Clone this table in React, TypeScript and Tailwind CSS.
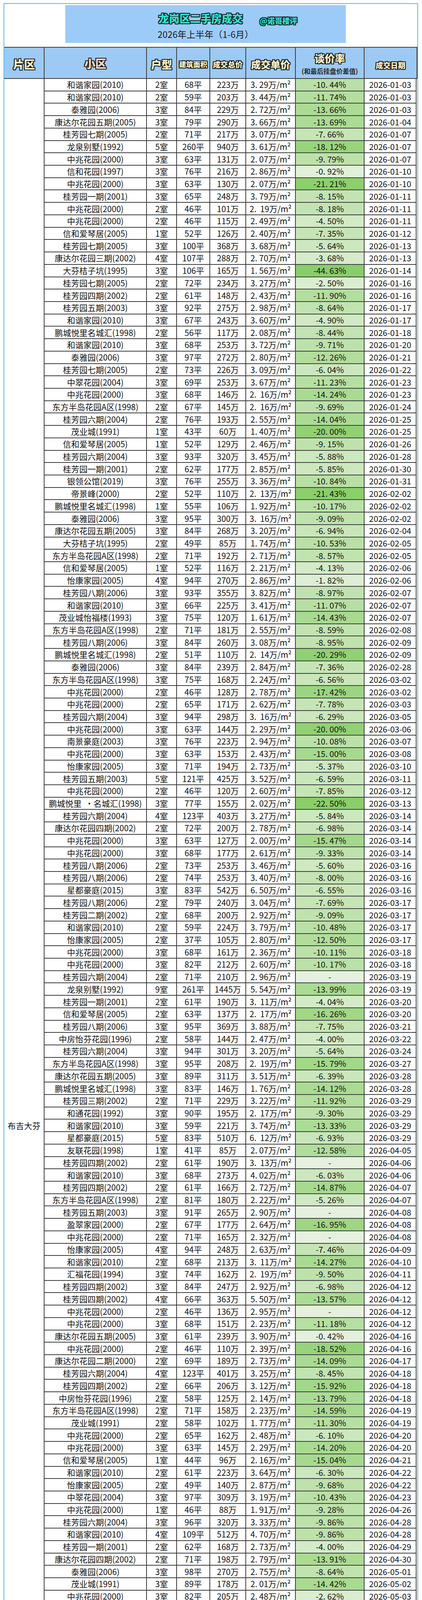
const ROWS = `
和谐家园(2010)|2|68|223|3.29|10.44|01-03
和谐家园(2010)|2|59|203|3.44|11.74|01-03
泰雅园(2006)|3|84|229|2.72|13.66|01-03
康达尔花园五期(2005)|3|79|290|3.66|13.69|01-04
桂芳园七期(2005)|2|71|217|3.07|7.66|01-07
龙泉别墅(1992)|5|260|940|3.61|18.12|01-07
中兆花园(2000)|3|63|131|2.07|9.79|01-07
信和花园(1997)|3|76|216|2.86|0.92|01-10
中兆花园(2000)|3|63|130|2.07|21.21|01-10
桂芳园一期(2001)|3|65|248|3.79|8.15|01-11
中兆花园(2000)|2|46|101|2.19*|8.18|01-11
中兆花园(2000)|2|46|115|2.49|4.50|01-11
信和爱琴居(2005)|1|52|126|2.40|7.35|01-12
桂芳园七期(2005)|3|100|368|3.68|5.64|01-13
康达尔花园三期(2002)|4|107|288|2.70|3.68|01-13
大芬桔子坑(1995)|3|106|165|1.56|44.63|01-14
桂芳园七期(2005)|2|72|234|3.27|2.50|01-16
桂芳园四期(2002)|2|61|148|2.43|11.90|01-16
桂芳园五期(2003)|3|92|275|2.98|8.64|01-17
和谐家园(2010)|3|67|243|3.60|4.90|01-17
鹏城悦里名城汇(1998)|2|56|117|2.08|8.44|01-18
和谐家园(2010)|3|68|253|3.72|9.71|01-20
泰雅园(2006)|3|97|272|2.80|12.26|01-21
桂芳园七期(2005)|2|73|226|3.09|6.04|01-22
中翠花园(2004)|3|69|253|3.67|11.23|01-23
中兆花园(2000)|3|68|146|2.16*|14.24|01-23
东方半岛花园A区(1998)|2|67|145|2.16*|9.69|01-24
桂芳园六期(2004)|2|76|193|2.55|14.04|01-25
茂业城(1991)|1|43|60|1.40|20.00|01-25
信和爱琴居(2005)|1|52|129|2.46|9.15|01-26
桂芳园六期(2004)|3|93|320|3.45|5.88|01-28
桂芳园一期(2001)|2|62|177|2.85|5.85|01-30
银领公馆(2019)|3|76|255|3.36|10.84|01-31
帝景峰(2000)|2|52|110|2.13*|21.43|02-02
鹏城悦里名城汇(1998)|1|55|106|1.92|10.17|02-02
泰雅园(2006)|3|95|300|3.16*|9.09|02-02
康达尔花园五期(2005)|3|84|268|3.20|6.94|02-04
大芬桔子坑(1995)|2|49|85|1.74|10.53|02-05
东方半岛花园A区(1998)|2|71|192|2.71|8.57|02-05
信和爱琴居(2005)|1|52|116|2.21|4.13|02-06
怡康家园(2005)|4|94|270|2.86|1.82|02-06
桂芳园八期(2006)|3|93|355|3.82|8.97|02-07
和谐家园(2010)|3|66|225|3.41|11.07|02-07
茂业城怡福楼(1993)|3|75|120|1.61|14.43|02-07
东方半岛花园A区(1998)|2|71|181|2.55|8.59|02-08
桂芳园八期(2006)|3|84|260|3.08|8.95|02-09
鹏城悦里名城汇(1998)|2|51|110|2.14*|20.29|02-09
泰雅园(2006)|3|84|239|2.84|7.36|02-28
东方半岛花园A区(1998)|3|75|168|2.24|6.56|03-02
中兆花园(2000)|2|46|128|2.78|17.42|03-02
中兆花园(2000)|2|65|171|2.62|7.78|03-03
桂芳园六期(2004)|3|94|298|3.16*|6.29|03-05
中兆花园(2000)|3|63|144|2.29|20.00|03-06
南景豪庭(2003)|3|76|223|2.94|10.08|03-07
中兆花园(2000)|3|63|153|2.43|15.00|03-08
怡康家园(2005)|3|71|194|2.73|5.37|03-10
桂芳园五期(2003)|5|121|425|3.52|6.59|03-11
中兆花园(2000)|2|46|120|2.60|7.85|03-12
鹏城悦里  ·名城汇(1998)|3|77|155|2.02|22.50|03-13
桂芳园六期(2004)|4|123|403|3.27|5.84|03-14
康达尔花园四期(2002)|2|72|200|2.78|6.98|03-14
中兆花园(2000)|3|63|127|2.00|15.47|03-14
中兆花园(2000)|3|68|177|2.61|9.33|03-14
桂芳园八期(2006)|2|73|253|3.46|5.60|03-16
桂芳园八期(2006)|2|74|253|3.40|8.00|03-16
星都豪庭(2015)|3|83|542|6.50|6.55|03-16
桂芳园八期(2006)|2|79|240|3.04|7.69|03-17
桂芳园二期(2002)|2|68|200|2.92|9.09|03-17
和谐家园(2010)|2|59|224|3.79|10.48|03-17
怡康家园(2005)|2|37|105|2.80|12.50|03-17
中兆花园(2000)|3|68|161|2.36|10.11|03-18
中兆花园(2000)|3|82|212|2.60|10.17|03-18
桂芳园六期(2004)|2|71|210|2.96|-|03-19
龙泉别墅(1992)|9|261|1445|5.54|13.99|03-19
桂芳园一期(2001)|2|61|190|3.11*|4.04|03-20
信和爱琴居(2005)|2|63|137|2.17*|16.26|03-20
桂芳园八期(2006)|3|95|369|3.88|7.75|03-21
中房怡芬花园(1996)|2|58|144|2.47|4.00|03-22
桂芳园六期(2004)|3|94|301|3.20|5.64|03-24
东方半岛花园A区(1998)|3|95|208|2.19*|15.79|03-27
康达尔花园五期(2005)|3|89|311|3.51|6.39|03-28
鹏城悦里名城汇(1998)|3|83|146|1.76|14.12|03-28
桂芳园三期(2002)|2|71|229|3.22|11.92|03-29
和通花园(1992)|3|90|195|2.17*|9.30|03-29
和谐家园(2010)|3|59|221|3.74|13.33|03-29
星都豪庭(2015)|5|83|510|6.12*|6.93|03-29
友联花园(1998)|1|41|85|2.07|12.58|04-05
桂芳园四期(2002)|2|61|190|3.13*|-|04-06
和谐家园(2010)|3|68|273|4.02|6.03|04-06
桂芳园四期(2002)|2|61|166|2.72|14.87|04-07
东方半岛花园A区(1998)|2|81|180|2.22|5.26|04-07
桂芳园五期(2003)|3|91|265|2.90|-|04-08
盈翠家园(2000)|2|67|177|2.64|16.95|04-08
中兆花园(2000)|2|71|165|2.32|-|04-08
怡康家园(2005)|4|94|248|2.63|7.46|04-09
和谐家园(2010)|2|68|213|3.11*|14.27|04-10
汇福花园(1994)|3|74|162|2.19*|9.50|04-11
桂芳园四期(2002)|3|84|247|2.92|6.98|04-12
桂芳园四期(2002)|4|66|363|5.50|13.57|04-12
中兆花园(2000)|2|46|136|2.95|-|04-12
中兆花园(2000)|3|68|151|2.23|11.18|04-12
康达尔花园五期(2005)|3|61|239|3.90|0.42|04-16
中兆花园(2000)|2|46|110|2.39|18.52|04-16
康达尔花园二期(2000)|2|69|189|2.73|14.09|04-17
桂芳园六期(2004)|4|123|401|3.25|8.45|04-18
桂芳园四期(2002)|2|66|206|3.12|15.92|04-18
中房怡芬花园(1996)|2|58|125|2.14|13.79|04-18
东方半岛花园A区(1998)|2|71|158|2.23|14.59|04-19
茂业城(1991)|2|58|102|1.77|11.30|04-19
中兆花园(2000)|2|65|162|2.48|6.10|04-20
中兆花园(2000)|3|63|145|2.29|14.20|04-20
信和爱琴居(2005)|1|44|96|2.16|15.04|04-21
和谐家园(2010)|2|61|223|3.64|6.30|04-22
怡康家园(2005)|2|49|140|2.87|9.68|04-22
中翠花园(2004)|3|97|309|3.19|10.43|04-23
中兆花园(2000)|1|46|88|1.91|9.28|04-26
桂芳园六期(2004)|3|96|320|3.33|9.86|04-28
和谐家园(2010)|4|109|512|4.70|9.86|04-28
桂芳园一期(2001)|2|62|168|2.73|4.00|04-29
康达尔花园四期(2002)|2|71|198|2.79|13.91|04-30
泰雅园(2006)|3|98|270|2.75|8.64|05-01
茂业城(1991)|3|89|178|2.01|14.42|05-02
中兆花园(2000)|3|82|205|2.48|2.62|05-03
桂芳园一期(2001)|2|62|173|2.79|8.95|05-05
和谐家园(2010)|3|67|263|3.95|9.31|05-05
祥云苑(1999)|2|62|138|2.22|16.67|05-06
桂芳园七期(2005)|4|72|357|4.97|4.80|05-08
中兆花园(2000)|3|68|151|2.21|20.53|05-09
桂芳园六期(2004)|5|97|348|3.60|5.43|05-11
桂芳园八期(2006)|2|77|225|2.91|12.11|05-11
茂业城(1991)|2|57|102|1.79|12.07|05-13
康达尔花园五期(2005)|3|84|278|3.30|6.71|05-14
桂芳园六期(2004)|3|96|296|3.09|6.10|05-15
帝景峰(2000)|3|73|165|2.27|6.53|05-16
桂芳园七期(2005)|3|96|385|4.00|6.20|05-16
桂芳园一期(2001)|2|67|188|2.80|9.62|05-16
桂芳园六期(2004)|5|96|338|3.53|12.89|05-17
康达尔花园五期蝴蝶堡/(2005)|3|101|317|3.14*|5.80|05-17
怡康家园(2005)|2|42|135|3.20|12.90|05-17
中兆花园(2000)|1|46|106|2.30|18.46|05-17
桂芳园五期(2003)|4|149|480|3.23|10.78|05-18
桂芳园五期(2003)|3|77|226|2.95|8.50|05-18
茂业城(1991)|2|65|121|1.86|10.37|05-18
中兆花园(2000)|2|46|109|2.37|24.83|05-18
东方半岛花园A区(1998)|2|79|183|2.32|16.82|05-20
桂芳园三期(2002)|2|69|173|2.52|-|05-23
康达尔花园二期(2000)|3|88|255|2.90|9.57|05-24
怡康家园(2005)|2|50|150|2.99|14.57|05-24
茂业城(1991)|2|63|108|1.71|3.57|05-26
鹏城悦里  ·名城汇(1998)|1|44|83|1.88|10.22|05-26
东方半岛花园A区(1998)|2|69|180|2.60|10.00|05-28
桂芳园四期(2002)|3|95|242|2.54|15.09|05-28
桂芳园五期(2003)|3|79|239|3.02|11.01|05-28
东方半岛花园A区(1998)|2|75|176|2.35|6.38|06-01
康达尔花园三期(2002)|3|89|232|2.61|10.69|06-03
桂芳园六期(2004)|3|98|283|2.88|5.60|06-04
东方半岛花园A区(1998)|2|69|160|2.32|11.11|06-06
东方半岛花园A区(1998)|4|120|264|2.19*|12.07|06-07
桂芳园六期(2004)|2|70|205|2.93|10.87|06-07
桂芳园五期(2003)|3|92|276|2.99|4.17|06-07
龙泉别墅(1992)|9|236|933|3.96|8.55|06-07
茂业城(1991)|2|52|107|2.07|6.96|06-07
怡康家园(2005)|2|37|105|2.79|25.36|06-07
桂芳园八期(2006)|3|93|500|5.38|14.97|06-11
中翠花园(2004)|2|72|202|2.82|3.81|06-13
和谐家园(2010)|2|59|214|3.63|23.57|06-14
中兆花园(2000)|2|65|158|2.45|5.95|06-15
帝景峰(2000)|3|67|152|2.25|5.12|06-21
倚龙华庭(2016)|2|48|168|3.52|11.58|06-29
`
  .trim()
  .split("\n")
  .map((line) => line.split("|"));

// green colour scale for the bargain rate column
function rateColor(rate: string) {
  const v = rate === "-" ? 0 : parseFloat(rate);
  const t = Math.min(v / 22, 1);
  const mix = (a: number, b: number) => Math.round(a + (b - a) * t);
  return `rgb(${mix(229, 137)}, ${mix(241, 206)}, ${mix(222, 104)})`;
}

function unitText(u: string) {
  const wide = u.endsWith("*");
  const n = u.replace("*", "");
  return n.replace(".", wide ? ".  " : ". ") + "万/m²";
}

function rateText(r: string) {
  return r === "-" ? "-" : `-${r.replace(".", ". ")}%`;
}

const OUTLINE =
  "[text-shadow:-2px_-2px_0_#1c1c1c,2px_-2px_0_#1c1c1c,-2px_2px_0_#1c1c1c,2px_2px_0_#1c1c1c,0_-2px_0_#1c1c1c,0_2px_0_#1c1c1c,-2px_0_0_#1c1c1c,2px_0_0_#1c1c1c]";

function HeadText({ children, size, fill }: { children: string; size: string; fill?: string }) {
  return (
    <span className={`${size} font-black leading-none ${fill ?? "text-[#fdf1c7]"} ${OUTLINE}`}>{children}</span>
  );
}

const cell = "flex shrink-0 items-center justify-center overflow-hidden whitespace-pre border-r-2 border-[#3d3d3d]";

export default function App() {
  return (
    <div className="h-[5575px] w-[1080px] overflow-hidden bg-white pt-[8px] font-['Noto_Sans_CJK_SC','Noto_Sans',sans-serif] text-[#111]">
      <div className="ml-[9px] w-[1061px] border-2 border-[#55bdea]">
        {/* title */}
        <div className="h-[112px] border-b-2 border-[#3d3d3d] pt-[3px]">
          <div className="ml-[156px] flex h-[97px] w-[718px] flex-col items-center bg-[#9dcbf8] pt-[11px]">
            <div className="flex h-[36px] items-end pl-[114px]">
              <span className={`text-[27px] font-black leading-none text-[#35e2d6] ${OUTLINE}`}>龙岗区二手房成交</span>
              <span className={`mb-[-2px] ml-[43px] text-[19px] font-black leading-none text-[#35e2d6] ${OUTLINE}`}>@诺哥楼评</span>
            </div>
            <div className="mt-[12px] flex h-[30px] items-center text-[23px] leading-none text-[#1a1a1a]">2026年上半年（1-6月）</div>
          </div>
        </div>

        {/* header */}
        <div className="flex h-[80px] border-b-2 border-[#3d3d3d] bg-[#9ccaf5]">
          <div className={`${cell} w-[103px] pt-[6px]`}>
            <HeadText size="text-[28px]">片区</HeadText>
          </div>
          <div className={`${cell} w-[262px] pt-[2px]`}>
            <HeadText size="text-[28px]" fill="text-[#fbdccb]">小区</HeadText>
          </div>
          <div className={`${cell} w-[77px] pt-[6px]`}>
            <HeadText size="text-[27px]">户型</HeadText>
          </div>
          <div className={`${cell} w-[85px] pt-[6px]`}>
            <HeadText size="text-[18px]">建筑面积</HeadText>
          </div>
          <div className={`${cell} w-[92px] pt-[6px]`}>
            <HeadText size="text-[19px]">成交总价</HeadText>
          </div>
          <div className={`${cell} w-[127px] pt-[6px]`}>
            <HeadText size="text-[25px]">成交单价</HeadText>
          </div>
          <div className={`${cell} w-[176px] flex-col gap-[12px] pt-[4px]`}>
            <HeadText size="text-[26px]">谈价率</HeadText>
            <span className="text-[16.5px] font-bold leading-none text-[#262626]">(和最后挂盘价差值)</span>
          </div>
          <div className={`${cell} w-[135px] pt-[10px]`}>
            <HeadText size="text-[19px]">成交日期</HeadText>
          </div>
        </div>

        {/* body */}
        <div className="flex">
          <div className="flex w-[103px] shrink-0 items-center justify-center border-r-2 border-[#3d3d3d] text-[21px]">
            布吉大芬
          </div>
          <div className="flex flex-col">
            {ROWS.map(([name, rooms, area, total, unit, rate, date], i) => (
              <div key={i} className="flex h-[31.73px] shrink-0 border-b-2 border-[#3d3d3d] text-[21px] leading-none">
                {name.includes("/") ? (
                  <div className="w-[262px] shrink-0 overflow-hidden border-r-2 border-[#3d3d3d] pt-[3px] text-center leading-[25px]">
                    {name.split("/")[0]}
                    <br />
                    {name.split("/")[1]}
                  </div>
                ) : (
                  <div className={`${cell} w-[262px]`}>{name}</div>
                )}
                <div className={`${cell} w-[77px]`}>{rooms}室</div>
                <div className={`${cell} w-[85px]`}>{area}平</div>
                <div className={`${cell} w-[92px]`}>{total}万</div>
                <div className={`${cell} w-[127px]`}>{unitText(unit)}</div>
                <div className={`${cell} w-[176px]`} style={{ backgroundColor: rateColor(rate) }}>
                  {rateText(rate)}
                </div>
                <div className={`${cell} w-[133px]`}>2026-{date}</div>
              </div>
            ))}
          </div>
        </div>
      </div>
    </div>
  );
}
